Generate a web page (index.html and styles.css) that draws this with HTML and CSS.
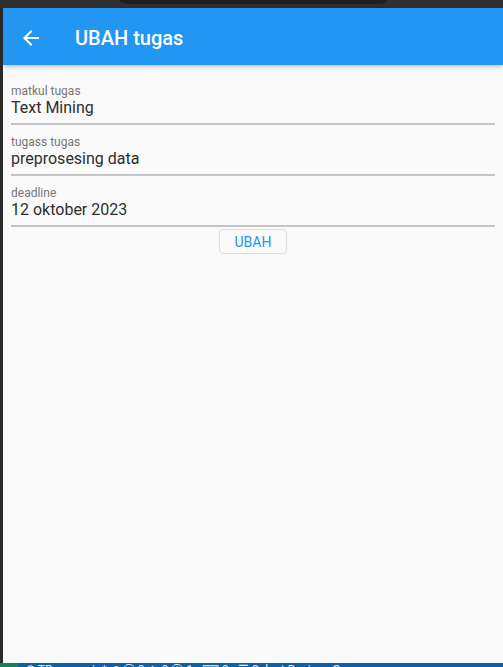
FILE: index.html
```html
<!DOCTYPE html>
<html>
<head>
<meta charset="utf-8">
<link rel="stylesheet" href="styles.css">
</head>
<body>
<div class="screen">
  <div class="topband"><div class="pill"></div></div>
  <div class="middle">
    <div class="sidestrip"></div>
    <div class="app">
      <header class="appbar">
        <div class="leading">
          <svg width="24" height="24" viewBox="0 0 24 24"><path fill="#fff" d="M20 11H7.83l5.59-5.59L12 4l-8 8 8 8 1.41-1.41L7.83 13H20v-2z"/></svg>
        </div>
        <div class="title">UBAH tugas</div>
      </header>
      <main class="form">
        <div class="field">
          <div class="label">matkul tugas</div>
          <div class="value">Text Mining</div>
        </div>
        <div class="field">
          <div class="label">tugass tugas</div>
          <div class="value">preprosesing data</div>
        </div>
        <div class="field">
          <div class="label">deadline</div>
          <div class="value">12 oktober 2023</div>
        </div>
        <div class="actions">
          <button class="btn">UBAH</button>
        </div>
      </main>
    </div>
  </div>
  <div class="statusbar">
    <div class="status-green"></div>
    <div class="status-text">⚲ TRoo · main* ⟲ ⓧ 0 ⚠ 0 ⓘ 1 · ⌨ 0 · ☰ Select Device · Go</div>
  </div>
</div>
</body>
</html>
```
FILE: styles.css
```css
html, body {
  margin: 0;
  padding: 0;
  background: #2e2e2e;
}
.screen {
  width: 503px;
  height: 667px;
  display: flex;
  flex-direction: column;
  overflow: hidden;
  font-family: Roboto, "Noto Sans", sans-serif;
}
.topband {
  height: 8px;
  background: #2f2f30;
  position: relative;
  flex: none;
}
.pill {
  position: absolute;
  left: 117px;
  top: -10px;
  width: 273px;
  height: 14px;
  border-radius: 0 0 10px 10px;
  background: #1f1f20;
}
.middle {
  flex: 1;
  display: flex;
  min-height: 0;
}
.sidestrip {
  width: 3px;
  flex: none;
  background: #2b2b2b;
}
.app {
  flex: 1;
  background: #fafafa;
  display: flex;
  flex-direction: column;
}
.appbar {
  height: 57px;
  flex: none;
  background: #2196f3;
  display: flex;
  align-items: center;
  box-shadow: 0 2px 4px rgba(0,0,0,0.22);
  position: relative;
  z-index: 1;
}
.leading {
  width: 56px;
  display: flex;
  justify-content: center;
  padding-top: 2px;
}
.leading svg { display: block; }
.title {
  margin-left: 16px;
  color: #fff;
  font-size: 20px;
  font-weight: 500;
  padding-top: 2px;
}
.form {
  padding: 9px 8px 0 8px;
}
.field {
  padding: 10px 0 6px;
  border-bottom: 2px solid #c4c4c4;
}
.label {
  font-size: 12px;
  line-height: 14px;
  color: #777;
}
.value {
  font-size: 16px;
  line-height: 19px;
  color: #2e2e2e;
}
.actions {
  display: flex;
  justify-content: center;
  padding-top: 2px;
}
.btn {
  width: 68px;
  height: 25px;
  background: #fafafa;
  border: 1px solid #dedede;
  border-radius: 4px;
  color: #2196f3;
  font-family: Roboto, sans-serif;
  font-size: 14px;
  padding: 0;
}
.statusbar {
  height: 4px;
  flex: none;
  background: #0e5fa3;
  display: flex;
  overflow: hidden;
}
.status-green {
  width: 18px;
  background: #16825d;
  flex: none;
}
.status-text {
  color: #e8eef5;
  font-size: 12px;
  line-height: 12px;
  padding-left: 8px;
  margin-top: 1px;
  white-space: nowrap;
}
```
